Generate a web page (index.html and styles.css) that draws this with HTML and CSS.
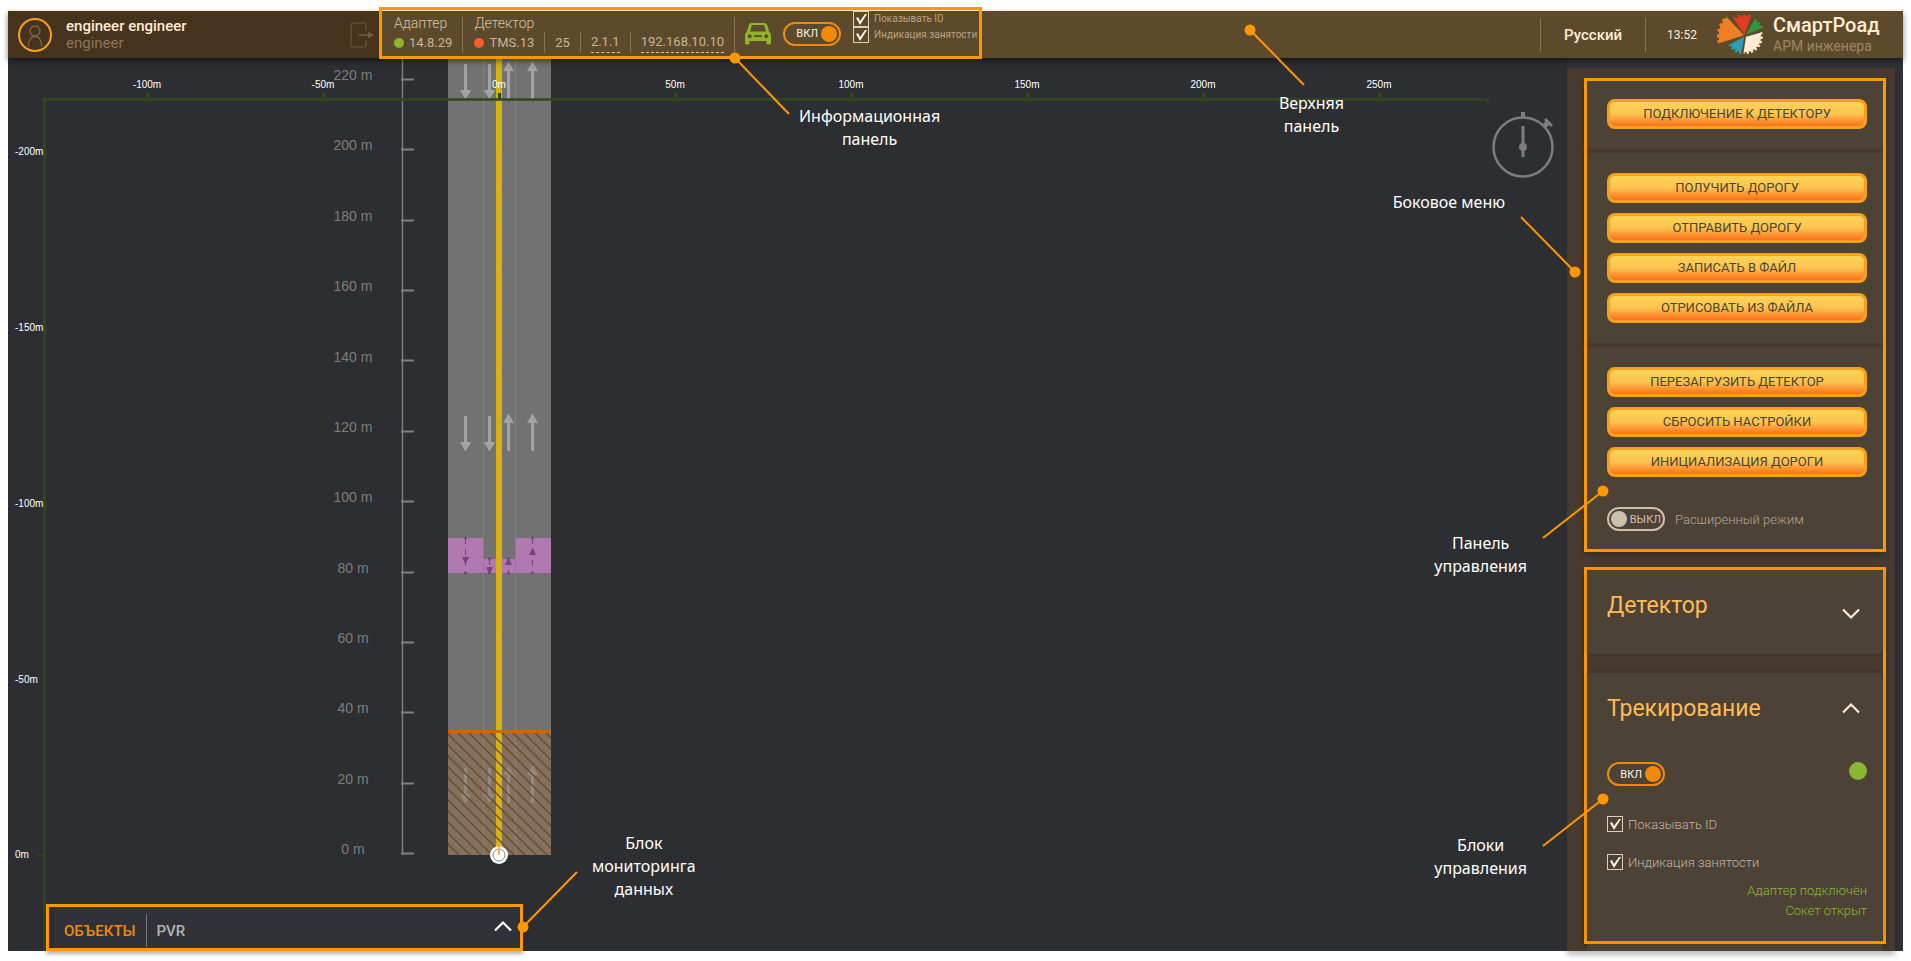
FILE: index.html
```html
<!DOCTYPE html>
<html lang="ru">
<head>
<meta charset="utf-8">
<title>СмартРоад — АРМ инженера</title>
<link rel="stylesheet" href="styles.css">
</head>
<body>
<div class="app">
  <header class="topbar">
    <div class="user">
      <svg class="avatar" width="36" height="36" viewBox="0 0 36 36" fill="none" aria-hidden="true">
        <circle cx="18" cy="18" r="16" stroke="#f9a01b" stroke-width="2"/>
        <circle cx="18" cy="14" r="5" stroke="#7e6545" stroke-width="1.3"/>
        <path d="M11.500 29.500c0-6 2-10 6.500-10s6.500 4 6.500 10" stroke="#7e6545" stroke-width="1.3"/>
      </svg>
      <div class="user-text">
        <span class="user-name">engineer engineer</span>
        <span class="user-role">engineer</span>
      </div>
      <button class="logout" type="button" aria-label="Выйти">
        <svg width="26" height="28" viewBox="0 0 26 28" fill="none" aria-hidden="true">
          <path d="M17 9V4q0-2-2-2H4Q2 2 2 4v20q0 2 2 2h11q2 0 2-2v-5" stroke="#5c472a" stroke-width="2"/>
          <path d="M9 14h11" stroke="#6f5b3e" stroke-width="1.500"/>
          <path d="M19 10.500L25 14l-6 3.500z" fill="#6f5b3e"/>
        </svg>
      </button>
    </div>

    <div class="info">
      <div class="info-group">
        <span class="info-title">Адаптер</span>
        <span class="info-value"><i class="dot dot-ok"></i>14.8.29</span>
      </div>
      <div class="info-group info-detector">
        <span class="info-title">Детектор</span>
        <div class="info-row">
          <span class="info-value"><i class="dot dot-bad"></i>TMS.13</span>
          <span class="info-value">25</span>
          <span class="info-value"><u>2.1.1</u></span>
          <span class="info-value"><u>192.168.10.10</u></span>
        </div>
      </div>
      <div class="info-controls">
        <svg class="car" width="26" height="22" viewBox="0 0 26 22" aria-hidden="true">
          <path fill="#8fb52c" fill-rule="evenodd" d="M6.500 0h13q2 0 2.600 1.800L24.200 9q1.800 1 1.800 3v8q0 1.500-1.500 1.500h-1.500q-1.500 0-1.500-1.500v-2h-17v2q0 1.500-1.500 1.500H1.500Q0 21.500 0 20v-8q0-2 1.800-3L3.900 1.800Q4.500 0 6.500 0zM7 2L5 8.500h16L19 2zM4.700 11.200a2 2 0 1 0 .01 0zM21.300 11.200a2 2 0 1 0 .01 0zM9 12.300v1.600h8v-1.600z"/>
        </svg>
        <label class="toggle"><input type="checkbox" checked aria-label="Трекирование в панели"><span class="track"><span>ВКЛ</span></span></label>
        <div class="info-checks">
          <label class="check"><input type="checkbox" checked>Показывать ID</label>
          <label class="check"><input type="checkbox" checked>Индикация занятости</label>
        </div>
      </div>
    </div>

    <div class="brand-area">
      <button class="lang" type="button">Русский</button>
      <span class="clock">13:52</span>
      <svg class="logo" width="46" height="41" viewBox="50 24 138 123" fill="none" aria-hidden="true">
        <g stroke-width="7">
          <g fill="#ee7f24"><path d="M131 88L58 111A77 77 0 0 1 80 34z"/><path d="M56 111A79 79 0 0 1 79 32" fill="none" stroke="#ee7f24" stroke-dasharray="9 8"/></g>
          <g fill="#e03c22"><path d="M133 86L101 40A58 58 0 0 1 151 33z"/><path d="M100 39A60 60 0 0 1 152 31" fill="none" stroke="#e03c22" stroke-dasharray="8 7"/></g>
          <g fill="#2f9a3c"><path d="M137 86L162 42A54 54 0 0 1 183 67z"/><path d="M163 41A56 56 0 0 1 184 66" fill="none" stroke="#2f9a3c" stroke-dasharray="7 6"/></g>
          <g fill="#ffecd2"><path d="M137 92L180 80A46 46 0 0 1 130 138z"/><path d="M182 79A48 48 0 0 1 130 140" fill="none" stroke="#ffecd2" stroke-dasharray="7 6"/></g>
          <g fill="#2d9fb4"><path d="M132 92L123 139A50 50 0 0 1 90 115z"/><path d="M123 141A52 52 0 0 1 88 116" fill="none" stroke="#2d9fb4" stroke-dasharray="7 6"/></g>
        </g>
      </svg>
      <div class="brand">
        <span class="brand-name">СмартРоад</span>
        <span class="brand-sub">АРМ инженера</span>
      </div>
    </div>
  </header>

  <div class="workspace">
    <main class="map">
      <svg class="scene" width="100%" height="100%" role="img" aria-label="Карта дороги">
        <defs>
          <pattern id="hatch" width="11" height="11" patternUnits="userSpaceOnUse">
            <path d="M-1 -1L12 12M-1 10L1 12M10 -1L12 1" stroke="#604a34" stroke-width="1.300"/>
          </pattern>
          <g id="arrows" fill="#a3a3a3">
            <path d="M464 416h3v26h4l-5.500 9.500l-5.500-9.500h4zM488 416h3v26h4l-5.500 9.500l-5.500-9.500h4z"/>
            <path d="M507 451v-28h-4l5.500-9.500l5.500 9.500h-4v28zM531 451v-28h-4l5.500-9.500l5.500 9.500h-4v28z"/>
          </g>
        </defs>
        <g transform="translate(-8 -58)">
          <path d="M402.500 58V855" stroke="#7e7e7e" stroke-width="1.500"/>
          <path d="M401 79.500h13M401 149.500h13M401 220.500h13M401 290.500h13M401 360.500h13M401 431.500h13M401 501.500h13M401 572.500h13M401 642.500h13M401 712.500h13M401 783.500h13M401 853.500h13" stroke="#808080" stroke-width="2"/>
          <g class="distance">
            <text x="353" y="80">220 m</text><text x="353" y="150">200 m</text><text x="353" y="221">180 m</text><text x="353" y="291">160 m</text><text x="353" y="362">140 m</text><text x="353" y="432">120 m</text><text x="353" y="502">100 m</text><text x="353" y="573">80 m</text><text x="353" y="643">60 m</text><text x="353" y="713">40 m</text><text x="353" y="784">20 m</text><text x="353" y="854">0 m</text>
          </g>
          <path fill="#727272" d="M448 58h103v797h-103z"/>
          <path fill="#b07ab0" d="M448 538h35v21h32v-21h36v35h-103z"/>
          <path fill="#86705c" d="M448 731h103v124h-103z"/>
          <path d="M483.500 58V855M515.500 58V855" stroke="#838383"/>
          <use href="#arrows"/><use href="#arrows" y="-352"/><use href="#arrows" class="arrows-dim" y="352"/>
          <g stroke="#76447a" stroke-dasharray="6 5"><path d="M465.500 538v35M489.500 559v14M508.500 559v14M532.500 538v35"/></g>
          <g fill="#76447a">
            <path d="M462 557h7l-3.500 7.500zM486 567h7l-3.500 7.500zM505 565h7l-3.500-7.500zM529 555h7l-3.500-7.500z"/>
            <circle cx="465.500" cy="538" r="1.500"/><circle cx="465.500" cy="573" r="1.500"/><circle cx="489.500" cy="559" r="1.500"/><circle cx="489.500" cy="573" r="1.500"/><circle cx="508.500" cy="559" r="1.500"/><circle cx="508.500" cy="573" r="1.500"/><circle cx="532.500" cy="538" r="1.500"/><circle cx="532.500" cy="573" r="1.500"/>
          </g>
          <path d="M499 58V848" stroke="#d4b20c" stroke-width="6"/>
          <path d="M499 150V848" stroke="#e5ac1c" stroke-width="3" stroke-dasharray="18 5"/>
          <path fill="url(#hatch)" d="M448 733h103v122h-103z"/>
          <path fill="#cc6a00" d="M448 730h103v3h-103z"/>
          <circle cx="499" cy="855" r="9" fill="#fff"/>
          <circle cx="499" cy="855" r="6" fill="none" stroke="#8a8a8a"/>
          <path d="M499 846v9" stroke="#f5b45e" stroke-width="2"/>
          <g stroke="#314a1d" fill="none">
            <path d="M43 99.500H1488" stroke-width="2.500"/>
            <path d="M1487.500 99v6" stroke-width="2"/>
            <path d="M44.500 98V952" stroke-width="2.500"/>
            <path d="M147.500 93v6M323.500 93v6M499.500 93v6M675.500 93v6M851.500 93v6M1027.500 93v6M1203.500 93v6M1379.500 93v6" stroke-width="3"/>
            <path d="M38 855.500h7"/>
          </g>
          <g class="axis-x">
            <text x="147" y="88">-100m</text><text x="323" y="88">-50m</text><text x="499" y="88">0m</text><text x="675" y="88">50m</text><text x="851" y="88">100m</text><text x="1027" y="88">150m</text><text x="1203" y="88">200m</text><text x="1379" y="88">250m</text>
          </g>
          <g class="axis-y">
            <text x="15" y="155">-200m</text><text x="15" y="331">-150m</text><text x="15" y="507">-100m</text><text x="15" y="683">-50m</text><text x="15" y="858">0m</text>
          </g>
        </g>
      </svg>

      <svg class="stopwatch" width="62" height="70" viewBox="0 0 62 70" fill="none" stroke="#7d7d7d" aria-hidden="true">
        <circle cx="31" cy="36" r="29.500" stroke-width="2.500"/>
        <path d="M31 1v6" stroke-width="4"/>
        <path d="M31 15v31" stroke-width="3"/>
        <circle cx="31" cy="36" r="4" fill="#7d7d7d" stroke="none"/>
        <path d="M51.500 16l5-5" stroke-width="5"/><path d="M53 8l7 7" stroke-width="3"/>
      </svg>

      <section class="monitor">
        <div class="monitor-inner">
          <button class="tab tab-active" type="button">ОБЪЕКТЫ</button>
          <button class="tab" type="button">PVR</button>
          <button class="chevron" type="button" aria-label="Развернуть">
            <svg width="18" height="16" viewBox="0 0 18 16" fill="none"><path d="M1 10.500L9 2.500l8 8" stroke="#fff" stroke-width="2.200"/></svg>
          </button>
        </div>
      </section>
    </main>

    <aside class="sidebar">
      <section class="panel">
        <div class="panel-part">
          <button class="action" type="button">ПОДКЛЮЧЕНИЕ К ДЕТЕКТОРУ</button>
        </div>
        <div class="panel-part">
          <button class="action" type="button">ПОЛУЧИТЬ ДОРОГУ</button>
          <button class="action" type="button">ОТПРАВИТЬ ДОРОГУ</button>
          <button class="action" type="button">ЗАПИСАТЬ В ФАЙЛ</button>
          <button class="action" type="button">ОТРИСОВАТЬ ИЗ ФАЙЛА</button>
        </div>
        <div class="panel-part">
          <button class="action" type="button">ПЕРЕЗАГРУЗИТЬ ДЕТЕКТОР</button>
          <button class="action" type="button">СБРОСИТЬ НАСТРОЙКИ</button>
          <button class="action" type="button">ИНИЦИАЛИЗАЦИЯ ДОРОГИ</button>
          <label class="toggle toggle-off"><input type="checkbox"><span class="track"><span>ВЫКЛ</span></span>Расширенный режим</label>
        </div>
      </section>

      <section class="panel blocks">
        <article class="card">
          <div class="card-head">
            <h2>Детектор</h2>
            <button class="chevron chevron-low" type="button" aria-label="Развернуть">
              <svg width="18" height="12" viewBox="0 0 18 12" fill="none"><path d="M1 1.500L9 9.500l8-8" stroke="#f7ead9" stroke-width="2.200"/></svg>
            </button>
          </div>
        </article>
        <article class="card card-open">
          <div class="card-head">
            <h2>Трекирование</h2>
            <button class="chevron" type="button" aria-label="Свернуть">
              <svg width="18" height="12" viewBox="0 0 18 12" fill="none"><path d="M1 10.500L9 2.500l8 8" stroke="#f7ead9" stroke-width="2.200"/></svg>
            </button>
          </div>
          <div class="tracking">
            <label class="toggle"><input type="checkbox" checked aria-label="Трекирование"><span class="track"><span>ВКЛ</span></span></label>
            <i class="lamp"></i>
          </div>
          <label class="check"><input type="checkbox" checked>Показывать ID</label>
          <label class="check"><input type="checkbox" checked>Индикация занятости</label>
          <p class="status">Адаптер подключён<br>Сокет открыт</p>
        </article>
      </section>
      <div class="next-card"></div>
    </aside>
  </div>

  <div class="notes notes-left">
    <svg class="pointers" width="900" height="941" aria-hidden="true">
      <path d="M727 47L781 103M515 916L569 861"/>
      <circle cx="727" cy="47" r="5.500"/><circle cx="515" cy="916" r="5.500"/>
    </svg>
    <p class="note note-info">Информационная<br>панель</p>
    <p class="note note-monitor">Блок<br>мониторинга<br>данных</p>
  </div>
  <div class="notes notes-right">
    <svg class="pointers" width="700" height="941" aria-hidden="true">
      <path d="M47 19L101 74M372 261L318 206M400 480L340 527M400 788L340 835"/>
      <circle cx="47" cy="19" r="5.500"/><circle cx="372" cy="261" r="5.500"/><circle cx="400" cy="480" r="5.500"/><circle cx="400" cy="788" r="5.500"/>
    </svg>
    <p class="note note-top">Верхняя<br>панель</p>
    <p class="note note-menu">Боковое меню</p>
    <p class="note note-control">Панель<br>управления</p>
    <p class="note note-blocks">Блоки<br>управления</p>
  </div>
</div>
</body>
</html>
```

FILE: styles.css
```css
* { box-sizing: border-box; }

body {
  margin: 0;
  padding: 11px 8px 10px;
  background: #fff;
  font-family: Roboto, "Liberation Sans", sans-serif;
  overflow: hidden;
}

button {
  margin: 0;
  padding: 0;
  border: 0;
  background: none;
  font: inherit;
  color: inherit;
  cursor: pointer;
}

.app {
  position: relative;
  display: flex;
  flex-direction: column;
  min-height: calc(100vh - 21px);
  background: #2d2e32;
}

/* Top bar */
.topbar {
  position: relative;
  z-index: 1;
  display: flex;
  height: 47px;
  background: #5d4a2d;
  box-shadow: 0 -1px 0 #ffe9c8, 0 3px 6px rgba(0, 0, 0, .5);
}

.user {
  display: flex;
  align-items: center;
  width: 371px;
  padding: 0 4px 0 9px;
  background: #46331e;
}

.user-text {
  display: flex;
  flex: 1;
  flex-direction: column;
  margin-left: 13px;
  font-size: 15px;
  line-height: 17px;
}

.user-name { color: #ffecd2; font-weight: 500; }
.user-role { color: #8c7658; }

.logout { display: flex; }

.info {
  display: flex;
  margin: -4px 0 -1px;
  padding: 1px 0 0 12px;
  border: 3px solid #ff9800;
}

.info-group {
  display: flex;
  flex-direction: column;
  align-self: flex-start;
  height: 36px;
  margin-top: 6px;
  padding-right: 10px;
  border-right: 1px solid #8a7350;
  font-size: 13px;
  line-height: 20px;
  color: #c9b596;
}

.info-title { height: 16px; font-size: 14px; font-weight: 300; line-height: 13px; color: #d6c3a4; }
.info-detector { padding-left: 11px; }
.info-row { display: flex; }

.info-value {
  display: flex;
  align-items: center;
  height: 21px;
}

.info-row .info-value + .info-value {
  margin-left: 10px;
  padding-left: 10px;
  border-left: 1px solid #8a7350;
}

.info-value u {
  text-decoration: none;
  border-bottom: 1px dashed #d6c3a4;
}

.dot {
  width: 10px;
  height: 10px;
  margin-right: 5px;
  border-radius: 50%;
}

.dot-ok { background: #8fb52c; }
.dot-bad { background: #f95d2c; }

.info-controls {
  display: flex;
  align-items: center;
  padding: 0 2px 0 10px;
}

.info-controls .toggle { margin: 0 12px; }
.info-checks { align-self: flex-start; }

.brand-area {
  display: flex;
  align-items: center;
  margin-left: auto;
  padding-right: 25px;
  color: #ffecd2;
}

.lang,
.clock {
  height: 34px;
  border-left: 1px solid #8a7350;
  line-height: 34px;
}

.lang { padding: 0 23px; font-size: 15px; font-weight: 500; }
.clock { padding: 0 20px 0 21px; font-size: 12px; }
.logo { margin-right: 10px; }

.brand { display: flex; flex-direction: column; width: 105px; }
.brand-name { font-size: 20px; font-weight: 500; line-height: 23px; white-space: nowrap; }
.brand-sub { font-size: 14px; line-height: 18px; color: #9c8565; white-space: nowrap; }

/* Check boxes and switches */
.check {
  display: flex;
  align-items: center;
  gap: 5px;
  font-size: 13px;
  font-weight: 300;
  color: #c3b5a2;
}

.check input {
  flex: none;
  width: 16px;
  height: 16px;
  margin: 0;
  appearance: none;
  border: 1px solid #e0cfb6;
}

.check input:checked::before {
  content: "";
  display: block;
  width: 14px;
  height: 14px;
  background: #fff3e0;
  clip-path: polygon(2px 6px, 4px 5px, 6px 9px, 11px 2px, 13px 2px, 6px 13px);
}

.info-checks .check { font-size: 10px; font-weight: 400; line-height: 16px; white-space: nowrap; color: #b8a383; }

.toggle {
  display: flex;
  align-items: center;
  gap: 10px;
  font-size: 13px;
  font-weight: 300;
  color: #b3a795;
}

.toggle input {
  position: absolute;
  opacity: 0;
  pointer-events: none;
}

.track {
  display: flex;
  align-items: center;
  gap: 3px;
  width: 58px;
  height: 24px;
  padding: 0 2px;
  border: 2px solid #f18a0a;
  border-radius: 12px;
  font-size: 11px;
  font-weight: 400;
  color: #fff3e0;
}

.track span { flex: 1; text-align: right; }

.track::after {
  content: "";
  width: 16px;
  height: 16px;
  border-radius: 50%;
  background: #f18a0a;
}

.toggle-off .track {
  flex-direction: row-reverse;
  border-color: #cdbfae;
  color: #cdbfae;
}

.toggle-off .track span { text-align: left; }
.toggle-off .track::after { background: #cdbfae; }

/* Workspace */
.workspace { display: flex; flex: 1; background: #313238; }

.map {
  position: relative;
  display: flex;
  flex: 1;
  flex-direction: column;
  background: #2d2e32;
}

.scene { position: absolute; inset: 0; }

.distance { font: 14px "Liberation Sans", sans-serif; fill: #7d7d7d; text-anchor: middle; }
.axis-x { font: 10px "Liberation Sans", sans-serif; fill: #fff; text-anchor: middle; }
.axis-y { font: 10px "Liberation Sans", sans-serif; fill: #fff; }
.arrows-dim { opacity: .5; }

.stopwatch { position: absolute; top: 53px; right: 13px; }

.monitor {
  position: relative;
  width: 477px;
  max-width: 90%;
  margin: auto 0 0 38px;
  padding-left: 5px;
  border: 3px solid #ff9800;
  background: #2d2e32;
  box-shadow: 0 3px 4px rgba(0, 0, 0, .3);
}

.monitor-inner {
  display: flex;
  align-items: center;
  height: 41px;
  padding-right: 8px;
  background: #313238;
}

.tab {
  height: 33px;
  margin-top: 6px;
  padding: 0 10px;
  font-size: 15px;
  font-weight: 500;
  color: #b4b4b6;
}

.tab + .tab { border-left: 1px solid #77777b; }
.tab-active { color: #f18a0a; }

.chevron { display: flex; margin-left: auto; }

/* Side menu */
.sidebar {
  display: flex;
  flex-direction: column;
  width: 328px;
  margin: 10px 8px 0 0;
  padding: 10px 9px 0 17px;
  background: #473b30;
  box-shadow: 0 4px 5px rgba(0, 0, 0, .25);
}

.panel {
  border: 3px solid #ff9800;
  background: #473b30;
  box-shadow: 0 3px 5px rgba(0, 0, 0, .25);
}

.panel + .panel { margin-top: 15px; }

.panel-part {
  display: flex;
  flex-direction: column;
  gap: 10px;
  padding: 20px 16px 20px 20px;
  background: #4d4236;
}

.panel-part:first-child { padding-top: 18px; }
.panel-part:last-child { padding-bottom: 18px; }
.panel-part + .panel-part { margin-top: 4px; }
.panel-part .toggle { margin-top: 20px; }

.action {
  height: 30px;
  border: 3px solid #f9a01b;
  border-radius: 8px;
  background: linear-gradient(#fdd257, #fbc44e 50%, #fb6f1d);
  font-size: 13px;
  line-height: 22px;
  color: #4d4236;
}

.card {
  height: 84px;
  padding: 20px 16px 20px 20px;
  border-radius: 5px;
  background: #4d4236;
  box-shadow: 0 0 5px rgba(0, 0, 0, .15);
}

.card-open { height: auto; margin-top: 19px; padding-bottom: 20px; }

.card-head {
  display: flex;
  align-items: center;
  height: 30px;
  padding-right: 7px;
}

.card h2 {
  margin: 0;
  font-size: 23px;
  font-weight: 400;
  color: #ffbb55;
}

.chevron-low { padding-top: 18px; }

.tracking {
  display: flex;
  justify-content: space-between;
  margin: 39px 0 30px;
}

.lamp {
  width: 18px;
  height: 18px;
  border-radius: 50%;
  background: #8ab833;
}

.card .check { height: 16px; }
.card .check + .check { margin-top: 22px; }

.status {
  margin: 11px 0 0;
  font-size: 13px;
  font-weight: 300;
  line-height: 20px;
  text-align: right;
  color: #8ab833;
}

.next-card { flex: 1; margin: 0 3px; background: #4d4236; }

/* Callouts laid over the interface */
.notes { position: absolute; top: 0; z-index: 2; pointer-events: none; }
.notes-left { left: 0; width: 900px; }
.notes-right { right: 0; width: 700px; }

.pointers { display: block; fill: #ff9800; stroke: #ff9800; stroke-width: 2; }
.pointers circle { stroke: none; }

.note {
  position: absolute;
  margin: 0;
  font-family: "Noto Sans", sans-serif;
  font-size: 16px;
  line-height: 23px;
  text-align: center;
  white-space: nowrap;
  color: #fff;
}

.note-info { left: 791px; top: 94px; }
.note-monitor { left: 584px; top: 821px; }
.note-top { right: 559px; top: 81px; }
.note-menu { right: 398px; top: 180px; }
.note-control { right: 376px; top: 521px; }
.note-blocks { right: 376px; top: 823px; }
```
